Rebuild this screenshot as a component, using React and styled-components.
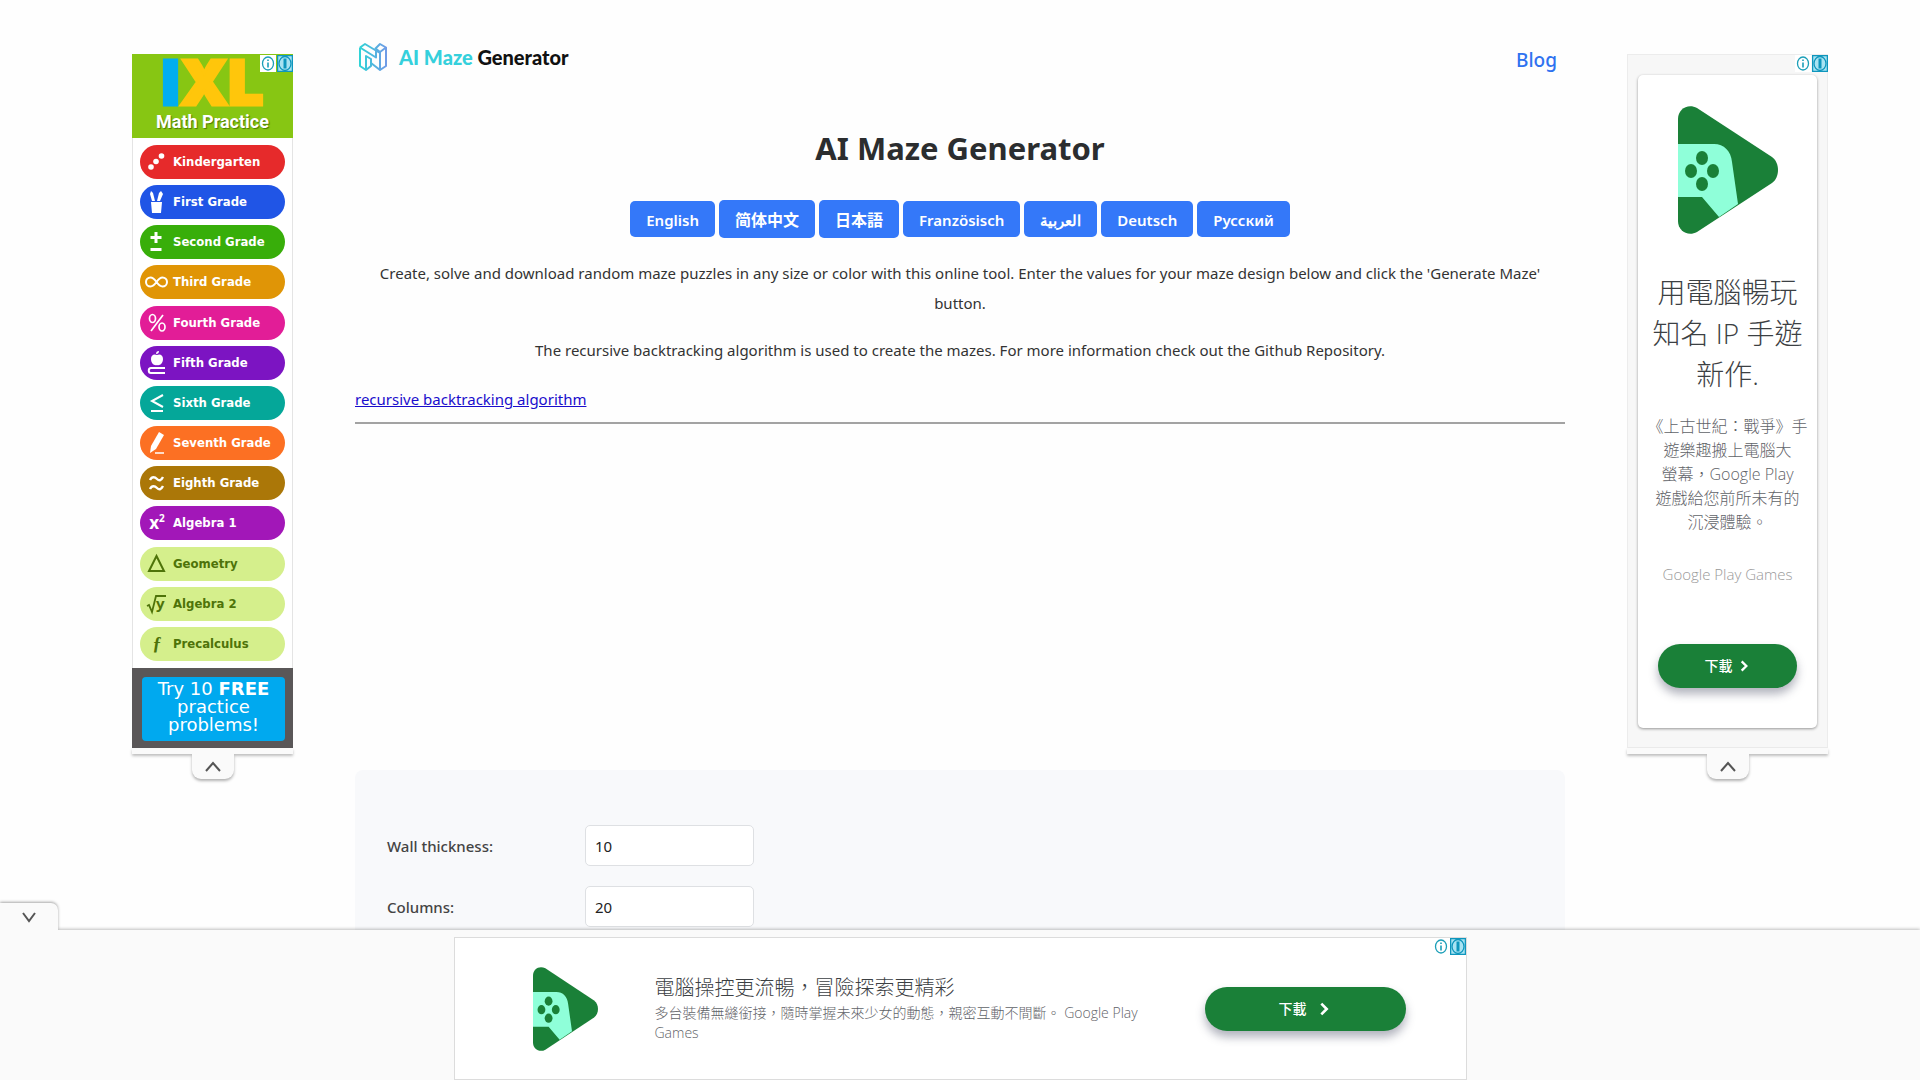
import React from "react";
import styled, { createGlobalStyle } from "styled-components";

const GlobalStyle = createGlobalStyle`
  *, *::before, *::after {
    box-sizing: border-box;
  }
  body {
    margin: 0;
    background: #fefefe;
    color: #333;
    font-family: "Noto Sans", "Open Sans", "Noto Sans CJK SC", sans-serif;
    font-size: 15px;
  }
`;

const cjk = `"Open Sans", "Noto Sans CJK TC", sans-serif`;

const Page = styled.div`
  display: grid;
  grid-template-rows: minmax(0, 1fr) auto;
  height: 100vh;
  overflow: hidden;
`;

const Content = styled.div`
  display: grid;
  grid-template-columns: 161px minmax(0, 1fr) 201px;
  align-items: start;
  gap: 62px;
  padding: 0 92px 0 132px;
  overflow: hidden;
`;

/* ---------- side rails ---------- */

const Rail = styled.aside`
  position: relative;
  display: flex;
  flex-direction: column;
  align-items: center;
  padding-top: 54px;
`;

const RailEdge = styled.div`
  width: 100%;
  height: 6px;
  background: #fafafa;
  box-shadow: 0 2px 3px rgba(0, 0, 0, 0.25);
`;

const RailTab = styled.button`
  display: flex;
  align-items: center;
  justify-content: center;
  width: 42px;
  height: 25px;
  padding: 0;
  border: 0;
  border-radius: 0 0 9px 9px;
  background: #fafafa;
  box-shadow: 0 2px 3px rgba(0, 0, 0, 0.3);
  clip-path: inset(0 -6px -6px -6px);
`;

const AdMarks = styled.div`
  position: absolute;
  top: ${(props) => props.$top};
  right: 0;
  display: flex;
  gap: 1px;
`;

const IxlAd = styled.div`
  display: flex;
  flex-direction: column;
  width: 100%;
  height: 694px;
  background: #fff;
`;

const IxlHead = styled.div`
  display: flex;
  flex-direction: column;
  align-items: center;
  height: 84px;
  background: #87c613;
`;

const IxlLogo = styled.div`
  height: 56px;
  color: #ffc60b;
  font: 900 62px/57px Inter, sans-serif;
  -webkit-text-stroke: 3px currentColor;
  & span {
    color: #00aeef;
  }
`;

const IxlTagline = styled.div`
  color: #fff;
  font: 700 18px/24px Roboto, sans-serif;
  text-shadow: 1px 1px 1px #4b7a05;
  white-space: nowrap;
`;

const GradeList = styled.nav`
  display: flex;
  flex: 1;
  flex-direction: column;
  justify-content: space-between;
  padding: 7px;
  border: solid #e4e4e4;
  border-width: 0 1px;
`;

const GradeLink = styled.a`
  display: flex;
  align-items: center;
  gap: 4px;
  height: 34px;
  padding-left: 5px;
  border-radius: 17px;
  background: ${(props) => props.$bg};
  color: ${(props) => (props.$dark ? "#4e7309" : "#fff")};
  font: 700 13px/16px "DejaVu Sans Condensed", "Noto Sans", sans-serif;
  text-decoration: none;
  white-space: nowrap;
`;

const TryBox = styled.div`
  padding: 9px 8px 7px 10px;
  background: #5a5758;
`;

const TryLink = styled.a`
  display: block;
  height: 64px;
  padding-top: 3px;
  border-radius: 4px;
  background: #00a9ef;
  color: #fff;
  font: 400 18px/18px "DejaVu Sans", sans-serif;
  text-align: center;
  text-decoration: none;
`;

const PlayAd = styled.div`
  width: 100%;
  height: 694px;
  padding: 20px 10px 19px;
  border: 1px solid #ececec;
  background: #f7f7f7;
`;

const PlayCard = styled.div`
  display: flex;
  flex-direction: column;
  align-items: center;
  height: 100%;
  padding-top: 31px;
  border-radius: 5px;
  background: #fff;
  box-shadow: 0 1px 3px rgba(0, 0, 0, 0.4);
  font-family: ${cjk};
  text-align: center;
`;

const PlayTitle = styled.div`
  margin-top: 38px;
  color: #3c4043;
  font-size: 28px;
  font-weight: 300;
  line-height: 41px;
  white-space: nowrap;
`;

const PlayText = styled.div`
  margin-top: 19px;
  color: #5f6368;
  font-size: 16px;
  font-weight: 300;
  line-height: 24px;
  white-space: nowrap;
`;

const PlayBrand = styled.div`
  margin-top: 28px;
  color: #999;
  font-size: 15px;
  font-weight: 300;
  line-height: 24px;
`;

const DownloadButton = styled.button`
  display: flex;
  align-items: center;
  justify-content: center;
  gap: ${(props) => (props.$wide ? "9px" : "4px")};
  width: ${(props) => (props.$wide ? "201px" : "139px")};
  height: 44px;
  padding: 0;
  border: 0;
  border-radius: 22px;
  background: #1a8038;
  box-shadow: 0 6px 10px rgba(60, 64, 90, 0.4);
  color: #fff;
  font: 500 14px/20px ${cjk};
`;

const PlayCta = styled.div`
  margin-top: 58px;
`;

/* ---------- main column ---------- */

const Header = styled.header`
  display: flex;
  align-items: center;
  justify-content: space-between;
  height: 60px;
  margin-top: 28px;
  padding: 0 8px 0 3px;
`;

const Brand = styled.a`
  display: flex;
  align-items: center;
  gap: 11px;
  padding-bottom: 2px;
  color: #111;
  font: 900 20px/24px Lato, sans-serif;
  text-decoration: none;
  & em {
    color: #35d0dc;
    font-style: normal;
  }
`;

const BlogLink = styled.a`
  padding-top: 3px;
  color: #2f72f0;
  font-size: 19px;
  font-weight: 500;
  text-decoration: none;
`;

const Title = styled.h1`
  margin: 36px 0 28px;
  color: #2b2d2f;
  font-size: 31px;
  font-weight: 700;
  line-height: 48px;
  text-align: center;
`;

const Languages = styled.div`
  display: flex;
  align-items: center;
  justify-content: center;
  gap: 4px;
  height: 38px;
`;

const LanguageButton = styled.button`
  height: ${(props) => (props.$cjk ? "38px" : "36px")};
  padding: 1px 16px 0;
  border: 0;
  border-radius: 5px;
  background: #3478f9;
  color: #fff;
  font-family: inherit;
  font-size: ${(props) => (props.$cjk ? "16px" : "15px")};
  font-weight: ${(props) => (props.$cjk ? 700 : 600)};
  line-height: 24px;
  white-space: nowrap;
`;

const Intro = styled.p`
  margin: 20px 0 0;
  line-height: 30px;
  text-align: center;
  & + & {
    margin-top: 17px;
  }
`;

const AlgorithmLink = styled.a`
  display: inline-block;
  margin-top: 19px;
  color: #1a0dcc;
  line-height: 30px;
`;

const Divider = styled.hr`
  height: 2px;
  margin: 8px 0 0;
  border: 0;
  background: #a3a3a3;
`;

const MazeForm = styled.form`
  display: flex;
  flex-direction: column;
  gap: 20px;
  margin-top: 346px;
  padding: 55px 32px 32px;
  border-radius: 8px;
  background: #f8f9fb;
`;

const Field = styled.div`
  display: grid;
  grid-template-columns: 170px 169px;
  gap: 28px;
  align-items: center;
  & label {
    color: #444;
    font-weight: 500;
  }
  & input {
    height: 41px;
    padding: 0 9px;
    border: 1px solid #dee0e3;
    border-radius: 5px;
    background: #fff;
    color: #222;
    font: inherit;
  }
`;

/* ---------- bottom banner ---------- */

const Banner = styled.footer`
  position: relative;
  display: flex;
  justify-content: center;
  padding: 7px 0 0;
  background: #fafafa;
  box-shadow: 0 -1px 3px rgba(0, 0, 0, 0.25);
`;

const BannerTab = styled.button`
  position: absolute;
  bottom: 100%;
  left: 0;
  display: flex;
  align-items: center;
  justify-content: center;
  width: 58px;
  height: 27px;
  padding: 0;
  border: 0;
  border-radius: 0 7px 0 0;
  background: #fafafa;
  box-shadow: 0 -1px 3px rgba(0, 0, 0, 0.35);
  clip-path: inset(-6px -6px 0 0);
`;

const BannerAd = styled.div`
  position: relative;
  display: flex;
  align-items: center;
  width: 1013px;
  height: 143px;
  padding: 0 60px 0 78px;
  border: 1px solid #dcdcdc;
  background: #fff;
  font-family: ${cjk};
`;

const BannerCopy = styled.div`
  flex: 1;
  margin-left: 57px;
`;

const BannerTitle = styled.div`
  color: #3c4043;
  font-size: 20px;
  font-weight: 300;
  line-height: 30px;
`;

const BannerText = styled.div`
  width: 490px;
  color: #5f6368;
  font-size: 14px;
  font-weight: 300;
  line-height: 20px;
  padding-bottom: 2px;
`;

/* ---------- drawings ---------- */

const Chevron = ({ d, size = 18, color = "#555", width = 2 }) => (
  <svg width={size} height={size} viewBox="0 0 18 18" fill="none" stroke={color} strokeWidth={width} aria-hidden="true">
    <path d={d} />
  </svg>
);

const UP = "M2 13 9 5l7 8";
const DOWN = "M3 5l6 8 6-8";
const RIGHT = "M6 3l6 6-6 6";

const AdIcons = ({ top }) => (
  <AdMarks $top={top}>
    <svg width="16" height="17" viewBox="0 0 16 17" fill="none" stroke="#1c9fb8" strokeWidth="1.3">
      <path d="M0 0h16v17H0z" fill="#fff" stroke="none" />
      <ellipse cx="8" cy="8.5" rx="5.5" ry="6.5" />
      <path d="M8 4.500v1.600M8 7.500v5" strokeWidth="1.6" />
    </svg>
    <svg width="16" height="17" viewBox="0 0 16 17" fill="none" stroke="#0f96bd" strokeWidth="1.3">
      <path d="M.6.600h14.800v15.800H.6z" fill="#a9e3f2" />
      <ellipse cx="8" cy="8.5" rx="6" ry="7" />
      <path d="M8 3.500v10" strokeWidth="3" />
    </svg>
  </AdMarks>
);

const PlayLogo = ({ width, height }) => (
  <svg width={width} height={height} viewBox="0 0 100 128" preserveAspectRatio="none" role="img" aria-label="Google Play Games">
    <path
      d="M0 13C0 3 10-3 19 2l75 49c8 6 8 20 0 26L19 126c-9 5-19-1-19-11z"
      fill="#1a8038"
    />
    <path d="M0 38h36c10 0 17 7 18 18l6 42-19 13-17-20H0z" fill="#8fffd9" />
    <g fill="#1a8038">
      <ellipse cx="24" cy="52" rx="6" ry="7" />
      <ellipse cx="13" cy="65" rx="6" ry="7" />
      <ellipse cx="35" cy="65" rx="6" ry="7" />
      <ellipse cx="24" cy="78" rx="6" ry="7" />
    </g>
  </svg>
);

const MazeLogo = () => (
  <svg width="30" height="30" viewBox="0 0 30 30" fill="none" stroke="url(#maze)" strokeWidth="2" strokeLinejoin="round" aria-hidden="true">
    <defs>
      <linearGradient id="maze" gradientUnits="userSpaceOnUse" x1="2" y1="0" x2="28" y2="0">
        <stop offset="0" stopColor="#30d3d6" />
        <stop offset="1" stopColor="#6f9be6" />
      </linearGradient>
    </defs>
    <path d="M2 5.500 7 2l15 9M2 5.500l16 10V9" />
    <path d="M2 5.500V24l6 4 5-4v-7l-5-3v14" />
    <path d="M17 7l5-5 6 3.500V24l-6 4-9-7M17 6l5 4 6-4.500M22 10v18" />
  </svg>
);

const icons = {
  dots: (
    <g fill="currentColor" stroke="none">
      <circle cx="6" cy="17" r="2.8" />
      <circle cx="11" cy="11.5" r="2.8" />
      <circle cx="16.5" cy="6" r="2.8" />
    </g>
  ),
  pencils: (
    <g fill="currentColor" stroke="none">
      <path d="M6 12h11l-1 11H7z" />
      <path d="M6 1l2 2 2 8H7L5 4zM16 1l2 3-3 7h-3l2-8z" />
    </g>
  ),
  plusMinus: <path d="M11 2v11M5.500 7.500h11M5.500 19.500h11" strokeWidth="3" />,
  infinity: (
    <path d="M11.500 12C9 8.500 7.500 7.500 5.500 7.500a4.500 4.500 0 0 0 0 9c2 0 3.500-1 6-4.500s4-4.500 6-4.500a4.500 4.500 0 0 1 0 9c-2 0-3.500-1-6-4.500z" />
  ),
  percent: (
    <g strokeWidth="1.7">
      <ellipse cx="7.5" cy="7.5" rx="3" ry="4" />
      <ellipse cx="17" cy="16" rx="3" ry="4" />
      <path d="M18 4 6 20" />
    </g>
  ),
  apple: (
    <>
      <path d="M12 4c3-1.500 6 0 6 4 0 4-3 7-6 6-3 1-6-2-6-6 0-4 3-5.500 6-4zM11 3c0-2 1-3 3-3 0 2-1 3-3 3z" fill="currentColor" stroke="none" />
      <path d="M20 17H6c-3 0-3 5 0 5h14" />
    </>
  ),
  lessEqual: <path d="M18 4 7 10l11 6M6 20h12" />,
  pencil: (
    <>
      <path d="M14 1l5 3-8 14-6 4 1-7z" fill="currentColor" stroke="none" />
      <path d="M10 22h9" strokeWidth="1.5" />
    </>
  ),
  approx: <path d="M5 9c2-4 5-3 7-1s4 2 6-2M5 18c2-4 5-3 7-1s4 2 6-2" strokeWidth="2.4" />,
  triangle: <path d="M11.500 4 19 19H4z" />,
};

const GradeIcon = styled.svg`
  flex: none;
  width: 24px;
  height: 24px;
  fill: none;
  stroke: currentColor;
  stroke-width: 2;
`;

const GradeSymbol = styled.span`
  width: 24px;
  flex: none;
  text-align: center;
  font: ${(props) =>
    props.$serif ? "italic 700 18px/24px 'Liberation Serif', serif" : "700 17px/24px 'Noto Sans', sans-serif"};
  & sup {
    font-size: 10px;
    line-height: 0;
  }
`;

const grades = [
  { name: "Kindergarten", bg: "#e62a2b", icon: "dots" },
  { name: "First Grade", bg: "#2055e6", icon: "pencils" },
  { name: "Second Grade", bg: "#38ae0a", icon: "plusMinus" },
  { name: "Third Grade", bg: "#e09506", icon: "infinity" },
  { name: "Fourth Grade", bg: "#e21d97", icon: "percent" },
  { name: "Fifth Grade", bg: "#7c14c2", icon: "apple" },
  { name: "Sixth Grade", bg: "#05a799", icon: "lessEqual" },
  { name: "Seventh Grade", bg: "#fc7023", icon: "pencil" },
  { name: "Eighth Grade", bg: "#ab7708", icon: "approx" },
  { name: "Algebra 1", bg: "#a217b8", symbol: <>x<sup>2</sup></> },
  { name: "Geometry", bg: "#d5ef8c", dark: true, icon: "triangle" },
  { name: "Algebra 2", bg: "#d5ef8c", dark: true, root: "y" },
  { name: "Precalculus", bg: "#d5ef8c", dark: true, symbol: "ƒ", serif: true },
];

const languages = [
  { label: "English", lang: "en" },
  { label: "简体中文", lang: "zh-CN", cjk: true },
  { label: "日本語", lang: "ja", cjk: true },
  { label: "Französisch", lang: "fr" },
  { label: "العربية", lang: "ar" },
  { label: "Deutsch", lang: "de" },
  { label: "Русский", lang: "ru" },
];

const fields = [
  { id: "wall", label: "Wall thickness:", value: "10" },
  { id: "columns", label: "Columns:", value: "20" },
];

const GradeMark = ({ grade }) => {
  if (grade.icon) {
    return (
      <GradeIcon viewBox="0 0 24 24" aria-hidden="true">
        {icons[grade.icon]}
      </GradeIcon>
    );
  }
  if (grade.root) {
    return (
      <GradeIcon viewBox="0 0 24 24" aria-hidden="true">
        <path d="M2 14l2-1 3 7L11 4h10" strokeWidth="1.8" />
        <text x="11" y="17" fontSize="15" fontFamily="Noto Sans" fill="currentColor" stroke="none">
          {grade.root}
        </text>
      </GradeIcon>
    );
  }
  return <GradeSymbol $serif={grade.serif}>{grade.symbol}</GradeSymbol>;
};

const LeftRail = () => (
  <Rail>
    <IxlAd>
      <IxlHead>
        <IxlLogo>
          <span>I</span>XL
        </IxlLogo>
        <IxlTagline>Math Practice</IxlTagline>
      </IxlHead>
      <GradeList>
        {grades.map((grade) => (
          <GradeLink key={grade.name} href="#" $bg={grade.bg} $dark={grade.dark}>
            <GradeMark grade={grade} />
            {grade.name}
          </GradeLink>
        ))}
      </GradeList>
      <TryBox>
        <TryLink href="#">
          Try 10 <b>FREE</b>
          <br />
          practice
          <br />
          problems!
        </TryLink>
      </TryBox>
    </IxlAd>
    <AdIcons top="55px" />
    <RailEdge />
    <RailTab type="button" aria-label="Collapse">
      <Chevron d={UP} />
    </RailTab>
  </Rail>
);

const RightRail = () => (
  <Rail>
    <PlayAd>
      <PlayCard>
        <PlayLogo width={100} height={128} />
        <PlayTitle>
          用電腦暢玩
          <br />
          知名 IP 手遊
          <br />
          新作.
        </PlayTitle>
        <PlayText>
          《上古世紀：戰爭》手
          <br />
          遊樂趣搬上電腦大
          <br />
          螢幕，Google Play
          <br />
          遊戲給您前所未有的
          <br />
          沉浸體驗。
        </PlayText>
        <PlayBrand>Google Play Games</PlayBrand>
        <PlayCta>
          <DownloadButton type="button">
            下載
            <Chevron d={RIGHT} size={14} color="#fff" width={3} />
          </DownloadButton>
        </PlayCta>
      </PlayCard>
    </PlayAd>
    <AdIcons top="55px" />
    <RailEdge />
    <RailTab type="button" aria-label="Collapse">
      <Chevron d={UP} />
    </RailTab>
  </Rail>
);

const App = () => {
  return (
    <Page>
      <GlobalStyle />
      <Content>
        <LeftRail />
        <main>
          <Header>
            <Brand href="#">
              <MazeLogo />
              <span>
                <em>AI Maze</em> Generator
              </span>
            </Brand>
            <BlogLink href="#">Blog</BlogLink>
          </Header>
          <Title>AI Maze Generator</Title>
          <Languages>
            {languages.map((item) => (
              <LanguageButton key={item.lang} type="button" lang={item.lang} $cjk={item.cjk}>
                {item.label}
              </LanguageButton>
            ))}
          </Languages>
          <Intro>
            Create, solve and download random maze puzzles in any size or color with this online tool. Enter the
            values for your maze design below and click the 'Generate Maze' button.
          </Intro>
          <Intro>
            The recursive backtracking algorithm is used to create the mazes. For more information check out the
            Github Repository.
          </Intro>
          <AlgorithmLink href="#">recursive backtracking algorithm</AlgorithmLink>
          <Divider />
          <MazeForm>
            {fields.map((field) => (
              <Field key={field.id}>
                <label htmlFor={field.id}>{field.label}</label>
                <input id={field.id} type="text" defaultValue={field.value} />
              </Field>
            ))}
          </MazeForm>
        </main>
        <RightRail />
      </Content>
      <Banner>
        <BannerTab type="button" aria-label="Hide banner">
          <Chevron d={DOWN} />
        </BannerTab>
        <BannerAd>
          <PlayLogo width={65} height={84} />
          <BannerCopy>
            <BannerTitle>電腦操控更流暢，冒險探索更精彩</BannerTitle>
            <BannerText>
              多台裝備無縫銜接，隨時掌握未來少女的動態，親密互動不間斷。 Google Play Games
            </BannerText>
          </BannerCopy>
          <DownloadButton type="button" $wide>
            下載
            <Chevron d={RIGHT} size={16} color="#fff" width={3} />
          </DownloadButton>
          <AdIcons top="0" />
        </BannerAd>
      </Banner>
    </Page>
  );
};

export default App;
